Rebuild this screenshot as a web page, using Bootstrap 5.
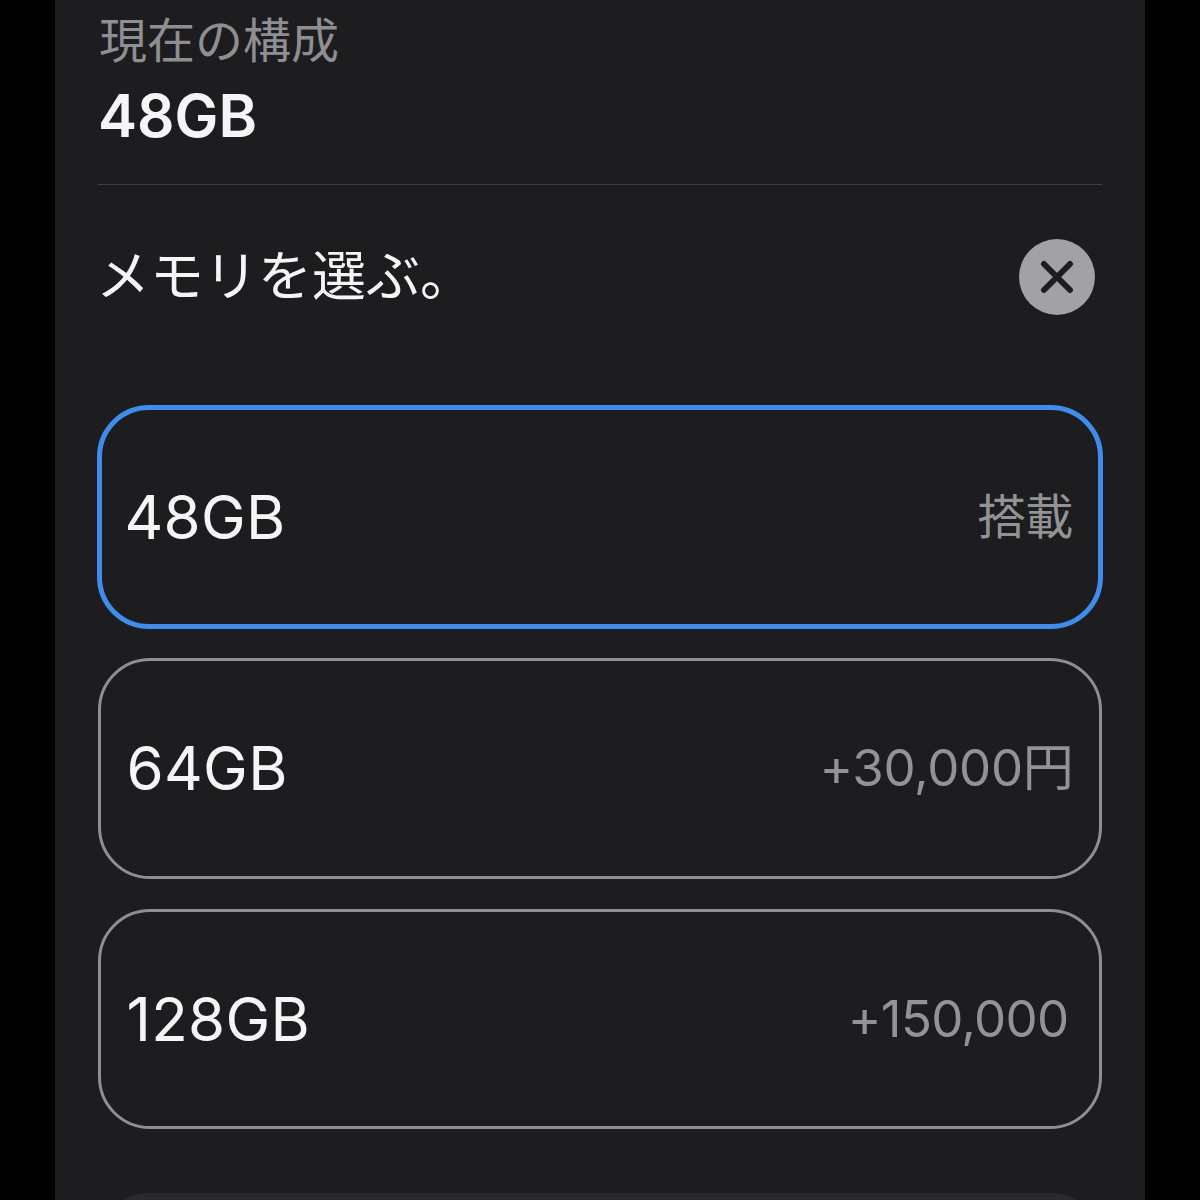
<!DOCTYPE html>
<html lang="ja">
<head>
<meta charset="utf-8">
<title>メモリを選ぶ</title>
<link href="https://cdn.jsdelivr.net/npm/bootstrap@5.3.0/dist/css/bootstrap.min.css" rel="stylesheet">
<style>
html, body { height: 1200px; overflow: hidden; background: #000; }
body { font-family: Inter, "Noto Sans CJK JP", sans-serif; color: #f5f5f7; }
.panel { width: 1090px; height: 1200px; margin-left: 55px; background: #1d1d1f; padding: 0 43px; overflow: hidden; }
.cur-label { font-size: 48px; line-height: 60px; height: 64px; padding: 11px 0 0 1px; color: #8e8e93; box-sizing: content-box; }
.cur-value { font-size: 58.6px; line-height: 64px; font-weight: 600; margin-top: 9px; }
.sep { border-top: 1px solid #3f3f42; margin-top: 36px; }
.head { height: 76px; margin-top: 54px; padding-right: 7px; }
.head-title { font-size: 54px; line-height: 60px; color: #f5f5f7; margin-left: -2px; }
.closer { width: 76px; height: 76px; border: 0; padding: 0; border-radius: 50%; background: #a1a1a6; }
.opts { margin-top: 90px; gap: 30px; }
.opt { height: 220.5px; border: 3px solid #8e8e93; border-radius: 52px; padding: 0 25.5px 0 25.5px; background: transparent; }
.opt-on { border: 5.5px solid #3f8cec; height: 224px; margin: 0 -1px -1px; padding: 0 25px 0 22.5px; }
.opt-name { font-size: 60px; line-height: 70px; letter-spacing: .3px; color: #f5f5f7; }
.opt-note { font-size: 51px; line-height: 60px; color: #929297; letter-spacing: -.3px; }
.opt-note-cjk { font-size: 48px; }
.opt-note-tight { letter-spacing: -.7px; padding-right: 5px; }
.next-btn { height: 120px; margin-top: 64px; border-radius: 50px 50px 0 0; background: #2a2a2c; }
</style>
</head>
<body>
<div class="panel">
  <div class="cur-label">現在の構成</div>
  <div class="cur-value">48GB</div>
  <div class="sep"></div>
  <div class="head d-flex align-items-center justify-content-between">
    <div class="head-title">メモリを選ぶ。</div>
    <button class="closer d-flex align-items-center justify-content-center" type="button" aria-label="閉じる">
      <svg width="34" height="34" viewBox="0 0 34 34"><path d="M4 4 L30 30 M30 4 L4 30" stroke="#1d1d1f" stroke-width="6" stroke-linecap="round" fill="none"/></svg>
    </button>
  </div>
  <div class="opts d-flex flex-column">
    <div class="opt opt-on d-flex align-items-center justify-content-between">
      <span class="opt-name">48GB</span><span class="opt-note opt-note-cjk">搭載</span>
    </div>
    <div class="opt d-flex align-items-center justify-content-between">
      <span class="opt-name">64GB</span><span class="opt-note">+30,000円</span>
    </div>
    <div class="opt d-flex align-items-center justify-content-between">
      <span class="opt-name">128GB</span><span class="opt-note opt-note-tight">+150,000</span>
    </div>
  </div>
  <div class="next-btn"></div>
</div>
</body>
</html>
